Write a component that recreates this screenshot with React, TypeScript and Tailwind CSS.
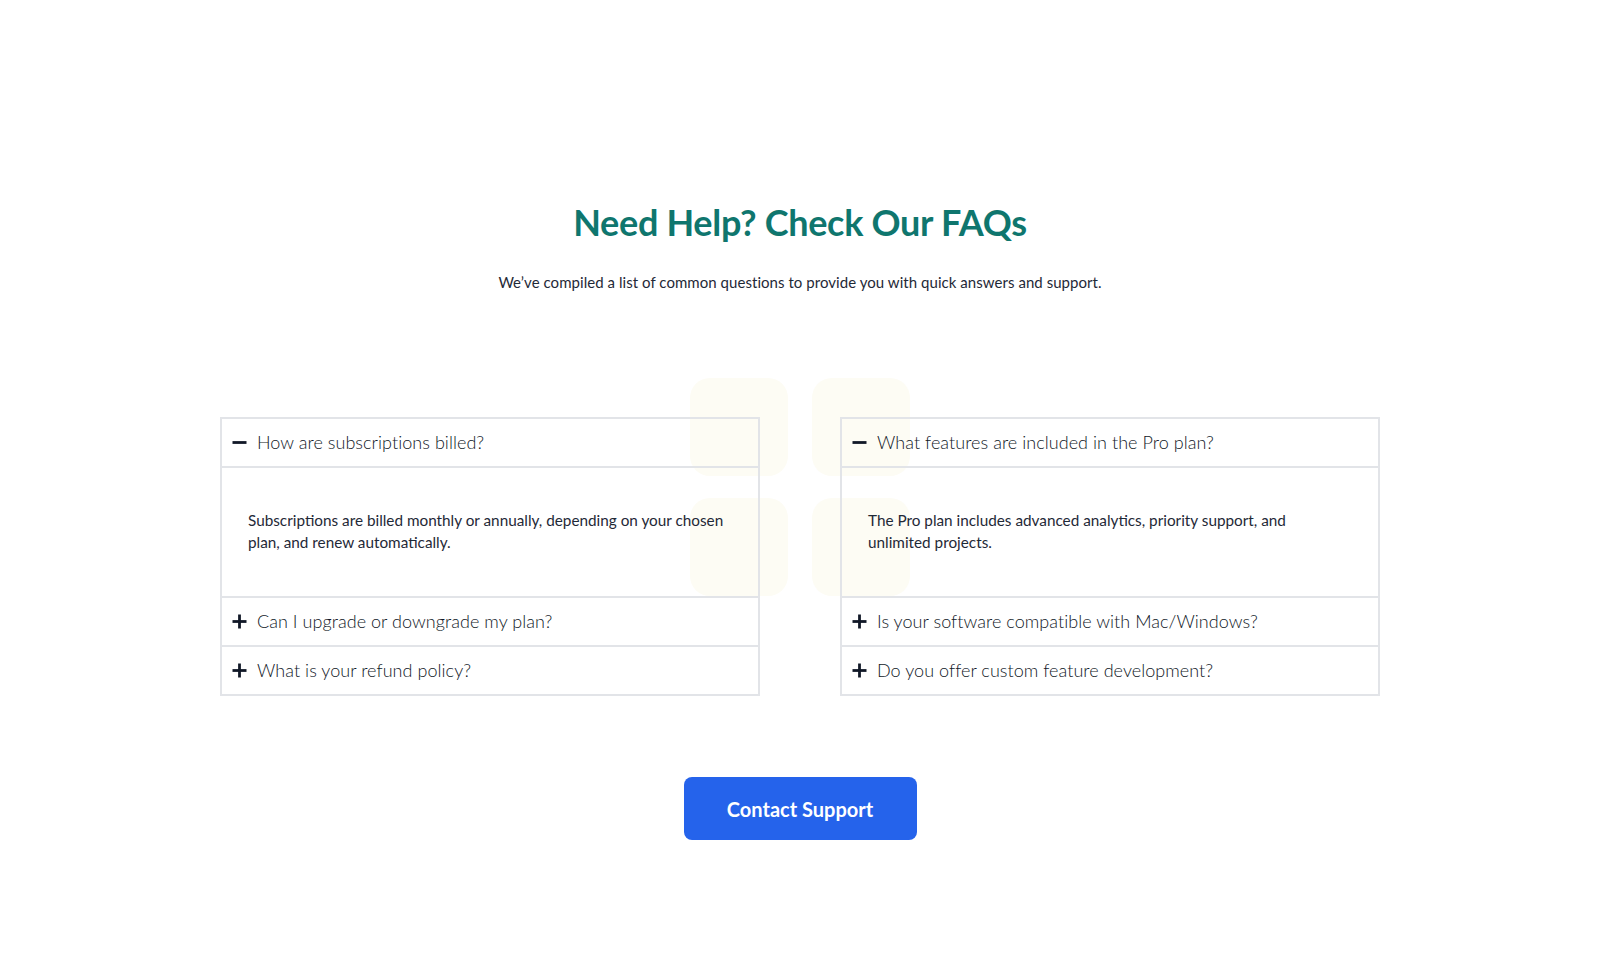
import { useState } from 'react'

type Faq = {
  question: string
  answer: string
}

const leftFaqs: Faq[] = [
  {
    question: 'How are subscriptions billed?',
    answer:
      'Subscriptions are billed monthly or annually, depending on your chosen plan, and renew automatically.',
  },
  {
    question: 'Can I upgrade or downgrade my plan?',
    answer: 'Yes, you can change your plan at any time from your account settings.',
  },
  {
    question: 'What is your refund policy?',
    answer: 'We offer a full refund within 14 days of purchase, no questions asked.',
  },
]

const rightFaqs: Faq[] = [
  {
    question: 'What features are included in the Pro plan?',
    answer:
      'The Pro plan includes advanced analytics, priority support, and unlimited projects.',
  },
  {
    question: 'Is your software compatible with Mac/Windows?',
    answer: 'Yes, it runs on both macOS and Windows, as well as in the browser.',
  },
  {
    question: 'Do you offer custom feature development?',
    answer: 'We do, for teams on our Enterprise plan. Get in touch to learn more.',
  },
]

const ToggleIcon = ({ open }: { open: boolean }) => (
  <svg width="15" height="15" viewBox="0 0 15 15" className="shrink-0">
    <path d="M0.5 7.5h14" stroke="#111827" strokeWidth="2.8" />
    {!open && <path d="M7.5 0.5v14" stroke="#111827" strokeWidth="2.8" />}
  </svg>
)

const FaqColumn = ({ faqs }: { faqs: Faq[] }) => {
  const [openIndex, setOpenIndex] = useState<number | null>(0)
  return (
    <div className="flex flex-col">
      {faqs.map((faq, i) => {
        const isOpen = openIndex === i
        return (
          <div key={faq.question} className="border-2 border-[#e2e4e8] -mt-[2px] first:mt-0">
            <button
              className="flex h-[47px] w-full items-center gap-[10px] pl-[10px] text-left text-[18px] font-light tracking-[0.05px] text-[#111827]"
              onClick={() => setOpenIndex(isOpen ? null : i)}
            >
              <ToggleIcon open={isOpen} />
              {faq.question}
            </button>
            {isOpen && (
              <div className="border-t-2 border-[#e2e4e8] pl-[26px] pr-[30px] pt-[41px] pb-[43px] text-[15.3px] leading-[22px] text-[#1f2937]">
                {faq.answer}
              </div>
            )}
          </div>
        )
      })}
    </div>
  )
}

export default function App() {
  return (
    <div className="min-h-[978px] bg-white font-['Lato',sans-serif]">
      <div className="mx-auto flex max-w-[1160px] flex-col items-center pt-[199px]">
        <h1 className="text-[36px] font-bold leading-[46px] tracking-[-0.3px] text-[#0f766e]">
          Need Help? Check Our FAQs
        </h1>
        <p className="mt-[26px] text-[15px] leading-[22px] tracking-[0.05px] text-[#1f2937]">
          We’ve compiled a list of common questions to provide you with quick answers and support.
        </p>

        <div className="relative mt-[124px] w-full">
          <div className="absolute left-[470px] top-[-39px] grid grid-cols-[98px_98px] gap-x-[24px] gap-y-[22px]">
            <div className="h-[98px] rounded-[20px] bg-[#fdfcf4]" />
            <div className="h-[98px] rounded-[20px] bg-[#fdfcf4]" />
            <div className="h-[98px] rounded-[20px] bg-[#fdfcf4]" />
            <div className="h-[98px] rounded-[20px] bg-[#fdfcf4]" />
          </div>
          <div className="relative grid grid-cols-2 gap-x-[80px]">
            <FaqColumn faqs={leftFaqs} />
            <FaqColumn faqs={rightFaqs} />
          </div>
        </div>

        <button className="mt-[81px] h-[63px] w-[233px] rounded-[8px] bg-[#2563eb] text-[20px] font-bold text-white">
          Contact Support
        </button>
      </div>
    </div>
  )
}
